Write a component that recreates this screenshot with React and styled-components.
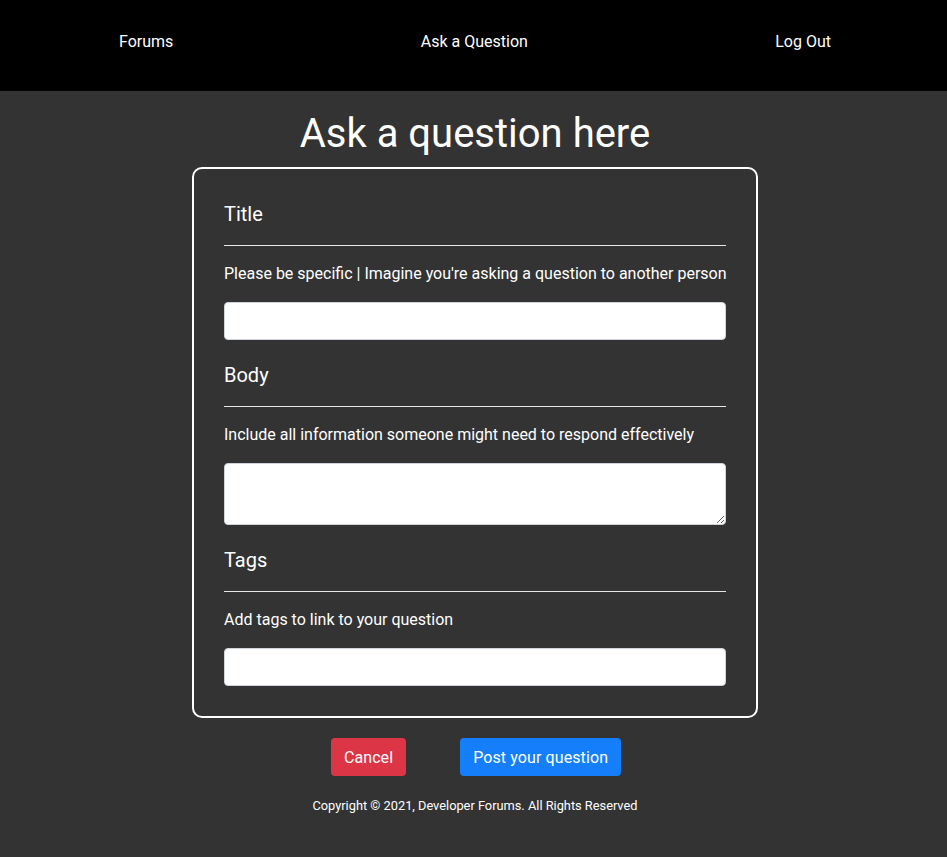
import React from 'react'
import styled, { createGlobalStyle } from 'styled-components'

const GlobalStyle = createGlobalStyle`
  * { box-sizing: border-box; }
  body {
    margin: 0;
    background: #333333;
    font-family: Roboto, "Liberation Sans", Arial, sans-serif;
    color: #fff;
  }
`

function App() {
    return (
        <>
            <GlobalStyle />
            <Page>
                <Nav>
                    <NavLink>Forums</NavLink>
                    <NavLink>Ask a Question</NavLink>
                    <NavLink>Log Out</NavLink>
                </Nav>
                <Main>
                    <Heading>Ask a question here</Heading>
                    <Card>
                        <Section>
                            <Label>Title</Label>
                            <Rule />
                            <Hint>Please be specific | Imagine you're asking a question to another person</Hint>
                            <Input type="text" />
                        </Section>
                        <Section>
                            <Label>Body</Label>
                            <Rule />
                            <Hint>Include all information someone might need to respond effectively</Hint>
                            <TextArea />
                        </Section>
                        <Section>
                            <Label>Tags</Label>
                            <Rule />
                            <Hint>Add tags to link to your question</Hint>
                            <Input type="text" />
                        </Section>
                    </Card>
                    <Buttons>
                        <Button color="#dc3545">Cancel</Button>
                        <Button color="#157efb">Post your question</Button>
                    </Buttons>
                    <Copyright>Copyright © 2021, Developer Forums. All Rights Reserved</Copyright>
                </Main>
            </Page>
        </>
    )
}

export default App

const Page = styled.div`
min-height: 100vh;
background: #333333;
`

const Nav = styled.nav`
height: 91px;
background: #000;
display: flex;
justify-content: space-between;
align-items: center;
padding: 0 116px 8px 119px;
`

const NavLink = styled.a`
color: #fff;
font-size: 16px;
cursor: pointer;
`

const Main = styled.main`
display: flex;
flex-direction: column;
align-items: center;
padding-left: 3px;
`

const Heading = styled.h1`
margin: 19px 0 9px;
font-size: 40px;
line-height: 48px;
font-weight: 400;
`

const Card = styled.div`
width: 566px;
border: 2px solid #fff;
border-radius: 10px;
padding: 30px 30px 7px;
`

const Section = styled.div`
margin-bottom: 23px;
`

const Label = styled.div`
margin-top: 3px;
font-size: 20px;
line-height: 24px;
`

const Rule = styled.hr`
margin: 19px 0 16px;
border: 0;
border-top: 1px solid #e6e6e6;
`

const Hint = styled.p`
margin: 0 0 16px;
font-size: 16px;
line-height: 24px;
white-space: nowrap;
`

const Input = styled.input`
display: block;
width: 100%;
height: 38px;
border: 1px solid #ced4da;
border-radius: 4px;
background: #fff;
`

const TextArea = styled.textarea`
display: block;
width: 100%;
height: 62px;
border: 1px solid #ced4da;
border-radius: 4px;
background: #fff;
resize: vertical;
`

const Buttons = styled.div`
display: flex;
gap: 54px;
margin-top: 20px;
padding-left: 2px;
`

const Button = styled.button`
height: 38px;
padding: 0 13px;
border: none;
border-radius: 4px;
background: ${p => p.color};
color: #fff;
font-family: inherit;
font-size: 16px;
letter-spacing: 0.1px;
`

const Copyright = styled.p`
margin: 22px 0 0;
font-size: 12.8px;
line-height: 16px;
`
